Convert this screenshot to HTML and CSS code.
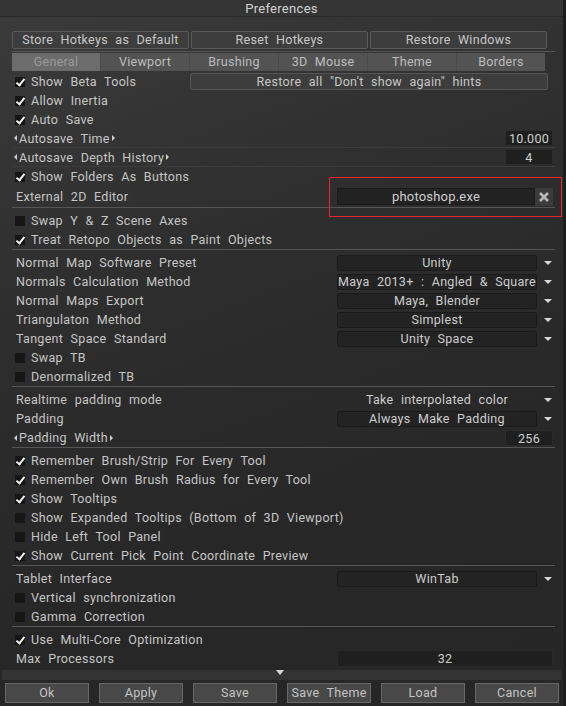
FILE: index.html
```html
<!DOCTYPE html>
<html>
<head>
<meta charset="utf-8">
<link rel="stylesheet" href="styles.css">
</head>
<body>
<div class="win">
  <div class="title">Preferences</div>
  <div class="panel">
    <div class="topbtns">
      <div class="btn">Store Hotkeys as Default</div>
      <div class="btn">Reset Hotkeys</div>
      <div class="btn">Restore Windows</div>
    </div>
    <div class="tabs">
      <div class="tab active">General</div>
      <div class="tab">Viewport</div>
      <div class="tab">Brushing</div>
      <div class="tab">3D Mouse</div>
      <div class="tab">Theme</div>
      <div class="tab">Borders</div>
    </div>

    <div class="section">
      <div class="row"><span class="cb on"></span><span class="lbl">Show Beta Tools</span><div class="hintbtn">Restore all "Don't show again" hints</div></div>
      <div class="row"><span class="cb on"></span><span class="lbl">Allow Inertia</span></div>
      <div class="row"><span class="cb on"></span><span class="lbl">Auto Save</span></div>
      <div class="row line"><span class="arr l"></span><span class="lbl">Autosave Time</span><span class="arr r"></span><div class="num">10.000</div></div>
      <div class="row line"><span class="arr l"></span><span class="lbl">Autosave Depth History</span><span class="arr r"></span><div class="num">4</div></div>
      <div class="row"><span class="cb on"></span><span class="lbl">Show Folders As Buttons</span></div>
      <div class="row tall"><span class="lbl pad">External 2D Editor</span><div class="path">photoshop.exe</div><div class="xbtn"><svg width="12" height="12" viewBox="0 0 12 12"><path d="M2 2L10 10M10 2L2 10" stroke="#b8b8b8" stroke-width="2.6"/></svg></div></div>
    </div>

    <div class="section">
      <div class="row"><span class="cb"></span><span class="lbl">Swap Y &amp; Z Scene Axes</span></div>
      <div class="row"><span class="cb on"></span><span class="lbl">Treat Retopo Objects as Paint Objects</span></div>
    </div>

    <div class="section">
      <div class="row"><span class="lbl pad">Normal Map Software Preset</span><div class="dd">Unity</div><span class="dda"></span></div>
      <div class="row"><span class="lbl pad">Normals Calculation Method</span><div class="dd">Maya 2013+ : Angled &amp; Square</div><span class="dda"></span></div>
      <div class="row"><span class="lbl pad">Normal Maps Export</span><div class="dd">Maya, Blender</div><span class="dda"></span></div>
      <div class="row"><span class="lbl pad">Triangulaton Method</span><div class="dd">Simplest</div><span class="dda"></span></div>
      <div class="row"><span class="lbl pad">Tangent Space Standard</span><div class="dd">Unity Space</div><span class="dda"></span></div>
      <div class="row"><span class="cb"></span><span class="lbl">Swap TB</span></div>
      <div class="row"><span class="cb"></span><span class="lbl">Denormalized TB</span></div>
    </div>

    <div class="section">
      <div class="row"><span class="lbl pad">Realtime padding mode</span><div class="dd plain">Take interpolated color</div><span class="dda"></span></div>
      <div class="row"><span class="lbl pad">Padding</span><div class="dd">Always Make Padding</div><span class="dda"></span></div>
      <div class="row"><span class="arr l"></span><span class="lbl">Padding Width</span><span class="arr r"></span><div class="num">256</div></div>
    </div>

    <div class="section">
      <div class="row"><span class="cb on"></span><span class="lbl">Remember Brush/Strip For Every Tool</span></div>
      <div class="row"><span class="cb on"></span><span class="lbl">Remember Own Brush Radius for Every Tool</span></div>
      <div class="row"><span class="cb on"></span><span class="lbl">Show Tooltips</span></div>
      <div class="row"><span class="cb"></span><span class="lbl">Show Expanded Tooltips (Bottom of 3D Viewport)</span></div>
      <div class="row"><span class="cb"></span><span class="lbl">Hide Left Tool Panel</span></div>
      <div class="row"><span class="cb on"></span><span class="lbl">Show Current Pick Point Coordinate Preview</span></div>
    </div>

    <div class="section">
      <div class="row"><span class="lbl pad">Tablet Interface</span><div class="dd">WinTab</div><span class="dda"></span></div>
      <div class="row"><span class="cb"></span><span class="lbl">Vertical synchronization</span></div>
      <div class="row"><span class="cb"></span><span class="lbl">Gamma Correction</span></div>
    </div>

    <div class="section last">
      <div class="row"><span class="cb on"></span><span class="lbl">Use Multi-Core Optimization</span></div>
      <div class="row"><span class="lbl pad">Max Processors</span><div class="wide">32</div></div>
    </div>
  </div>
  <div class="scrollstrip"><span class="down"></span></div>
  <div class="bottom">
    <div class="bbtn">Ok</div>
    <div class="bbtn">Apply</div>
    <div class="bbtn">Save</div>
    <div class="bbtn">Save Theme</div>
    <div class="bbtn">Load</div>
    <div class="bbtn">Cancel</div>
  </div>
  <div class="redbox"></div>
</div>
</body>
</html>
```

FILE: styles.css
```css
* { box-sizing: border-box; }
html, body { margin: 0; padding: 0; }
body {
  width: 566px;
  height: 706px;
  overflow: hidden;
  background: #262626;
  font-family: Roboto, "Liberation Sans", sans-serif;
  font-size: 12.5px;
  color: #c6c6c6;
  word-spacing: 4px;
  letter-spacing: 0.3px;
}
.win {
  position: relative;
  width: 566px;
  height: 706px;
  background: linear-gradient(160deg, #3b3b3b 0%, #2e2e2e 35%, #272727 70%, #262626 100%);
  border-right: 3px solid #1e1e1e;
  display: flex;
  flex-direction: column;
}
.title {
  height: 17px;
  line-height: 17px;
  text-align: center;
  background: #353535;
  border-bottom: 1px solid #2a2a2a;
  color: #d2d2d2;
  font-size: 13px;
}
.panel {
  flex: 1;
  padding: 14px 10px 0 12px;
}
.topbtns {
  display: grid;
  grid-template-columns: 177px 177px 177px;
  gap: 2px;
  border-bottom: 1px solid #555;
  padding-bottom: 2px;
  width: 543px;
}
.btn {
  height: 18px;
  line-height: 16px;
  text-align: center;
  background: #3d3d3d;
  border: 1px solid #5a5a5a;
  border-radius: 2px;
  color: #c8c8c8;
}
.tabs {
  display: flex;
  width: 533px;
  margin-top: 1px;
  height: 18px;
  background: #555;
}
.tab {
  flex: 1;
  text-align: center;
  line-height: 18px;
  color: #bdbdbd;
  background: #535353;
  border-right: 1px solid #4a4a4a;
}
.tab.active { background: #6c6c6c; color: #9a9a9a; }
.tab:last-child { border-right: none; }

.section {
  margin-top: 3px;
  border-bottom: 1px solid #555;
  width: 543px;
}
.tabs + .section { margin-top: 1px; }
.section.last { border-bottom: none; }
.row {
  height: 19px;
  display: flex;
  align-items: center;
  position: relative;
  white-space: nowrap;
}
.row.tall { height: 21px; }
.row.line { border-bottom: 1px solid #3b3b3b; }
.cb {
  width: 10px; height: 10px;
  margin-left: 3px;
  margin-right: 6px;
  background: #161616;
  flex: none;
  position: relative;
}
.cb.on::after {
  content: "";
  position: absolute;
  left: 3px; top: 0px;
  width: 3px; height: 7px;
  border: solid #f2f2f2;
  border-width: 0 2px 2px 0;
  transform: rotate(38deg);
}
.lbl { color: #c6c6c6; }
.lbl.pad { padding-left: 4px; }
.arr { width: 0; height: 0; border-top: 3px solid transparent; border-bottom: 3px solid transparent; flex: none; }
.arr.l { border-right: 3px solid #d0d0d0; margin-left: 2px; margin-right: 2px; }
.arr.r { border-left: 3px solid #d0d0d0; margin-left: 2px; }
.hintbtn {
  position: absolute;
  left: 178px;
  width: 358px;
  top: 1px;
  height: 17px;
  line-height: 15px;
  text-align: center;
  background: #3d3d3d;
  border: 1px solid #555;
  border-radius: 2px;
  color: #c8c8c8;
}
.num {
  margin-left: auto;
  width: 48px;
  height: 16px;
  line-height: 16px;
  text-align: center;
  background: #1f1f1f;
  border: 1px solid #2c2c2c;
  color: #cfcfcf;
  margin-right: 2px;
}
.path {
  margin-left: auto;
  width: 198px;
  height: 17px;
  line-height: 15px;
  text-align: center;
  background: #222;
  border: 1px solid #1a1a1a;
  color: #cfcfcf;
  font-size: 13px;
  letter-spacing: 0.2px;
}
.xbtn {
  width: 18px;
  height: 18px;
  margin-right: 2px;
  background: #3b3b3b;
  display: flex;
  align-items: center;
  justify-content: center;
}
.dd {
  margin-left: auto;
  width: 200px;
  height: 16px;
  line-height: 14px;
  text-align: center;
  background: #232323;
  border: 1px solid #1a1a1a;
  border-radius: 2px;
  color: #cdcdcd;
  overflow: visible;
}
.dd.plain { background: transparent; border-color: transparent; }
.dda {
  width: 0; height: 0;
  border-left: 4px solid transparent;
  border-right: 4px solid transparent;
  border-top: 4px solid #d8d8d8;
  margin-left: 7px;
  margin-right: 3px;
}
.wide {
  margin-left: auto;
  margin-right: 2px;
  width: 216px;
  height: 17px;
  line-height: 15px;
  text-align: center;
  background: #1f1f1f;
  border: 1px solid #2a2a2a;
  border-radius: 2px;
  color: #cdcdcd;
}
.scrollstrip {
  height: 10px;
  margin: 0 2px 3px 2px;
  background: #333;
  display: flex;
  justify-content: center;
  align-items: flex-start;
}
.down {
  width: 0; height: 0;
  border-left: 4px solid transparent;
  border-right: 4px solid transparent;
  border-top: 5px solid #d8d8d8;
  margin-left: -4px;
}
.bottom {
  display: flex;
  gap: 10px;
  padding: 0 0 3px 5px;
}
.bbtn {
  width: 84px;
  height: 20px;
  line-height: 18px;
  text-align: center;
  background: #484848;
  border: 1px solid #676767;
  color: #c4c4c4;
}
.redbox {
  position: absolute;
  left: 329px;
  top: 177px;
  width: 233px;
  height: 40px;
  border: 1px solid #e8262a;
}
```
